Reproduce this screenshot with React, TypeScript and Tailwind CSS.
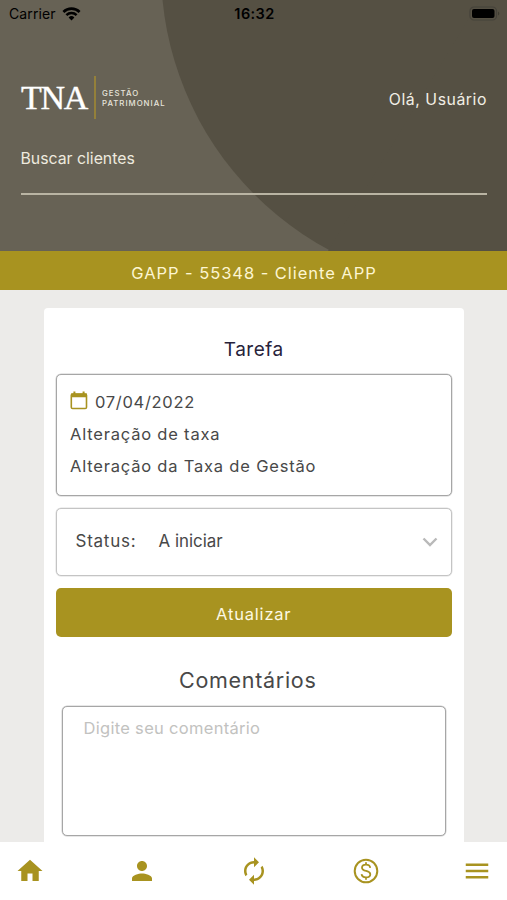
import type { ReactNode } from "react";
import { cva, type VariantProps } from "class-variance-authority";
import { MdAutorenew, MdHome, MdMenu, MdPerson } from "react-icons/md";

const boxVariants = cva("border bg-white rounded-[5px]", {
  variants: {
    tone: {
      dark: "border-[#a6a6a6] shadow-[0_0_0_0.5px_#d0d0d0]",
      light: "border-[#c4c4c4] shadow-[0_0_0_0.5px_#e0e0e0]",
    },
  },
  defaultVariants: {
    tone: "dark",
  },
});

interface BoxProps extends VariantProps<typeof boxVariants> {
  className: string;
  children: ReactNode;
}

const Box = ({ tone, className, children }: BoxProps) => (
  <div className={`${boxVariants({ tone })} ${className}`}>{children}</div>
);

const StatusBar = () => (
  <div className="grid h-7 grid-cols-3 items-center pl-[9px] pr-[7px] text-black">
    <div className="flex items-center gap-[6px] text-[14px] leading-none">
      <span className="tracking-[0.1px]">Carrier</span>
      <svg width="19" height="14" viewBox="0 0 19 14" fill="none" className="-mt-px">
        <path d="M1.4 5a11.5 11.5 0 0 1 16.2 0" stroke="#000" strokeWidth="2.6" />
        <path d="M4.4 8.2a7.2 7.2 0 0 1 10.2 0" stroke="#000" strokeWidth="2.5" />
        <path d="M9.5 13.4 6.6 10.5a4.1 4.1 0 0 1 5.8 0Z" fill="#000" />
      </svg>
    </div>
    <span className="text-center text-[14.5px] font-semibold leading-none tracking-[0.4px]">
      16:32
    </span>
    <svg className="-mt-px justify-self-end" width="31" height="15" viewBox="0 0 31 15">
      <rect x="1" y="1" width="26.5" height="13" rx="4" fill="none" stroke="#45423a" strokeWidth="1.2" />
      <rect x="3" y="3" width="22.5" height="9" rx="2" fill="#000" />
      <path d="M29 5.5a2.2 2.2 0 0 1 0 4Z" fill="#3f3c32" />
    </svg>
  </div>
);

const Logo = () => (
  <div className="flex items-center">
    <span className="w-[67px] whitespace-nowrap pl-px font-['Liberation_Serif',serif] text-[34px] leading-none tracking-[-1.3px] text-white [-webkit-text-stroke:0.4px_white]">
      TNA
    </span>
    <span className="ml-[7px] h-[43px] w-[2px] bg-[#94803a]" />
    <span className="ml-[6px] whitespace-nowrap text-[7.8px] font-medium leading-[10px] tracking-[1px] text-[#e8e5dc]">
      GESTÃO
      <br />
      PATRIMONIAL
    </span>
  </div>
);

const Header = () => (
  <header className="relative h-[251px] overflow-hidden bg-[#676255]">
    <svg className="absolute inset-0" width="507" height="251" viewBox="0 0 507 251">
      <circle cx="480" cy="-31" r="319" fill="#555043" />
      <path d="M480 0h27v251H328Z" fill="#555043" />
    </svg>
    <div className="relative">
      <StatusBar />
      <div className="mt-12 flex items-center justify-between px-5">
        <Logo />
        <span className="pt-[4px] text-[15.8px] tracking-[0.55px] text-[#f1eee5]">Olá, Usuário</span>
      </div>
      <div className="ml-[20.5px] mr-5 mt-[28px] h-[48px] border-b-2 border-[#b9b4a3] text-[15.8px] leading-6 text-[#eeeadf]">
        Buscar clientes
      </div>
    </div>
  </header>
);

const CalendarIcon = () => (
  <svg width="18" height="19" viewBox="0 0 18 19" fill="none" className="-mt-[3px]">
    <rect x="1.3" y="3" width="15.2" height="14.5" rx="1.3" stroke="#a89320" strokeWidth="1.6" />
    <path d="M1 2.6h16v3.6H1zM3.4.6h2v3h-2zM12.6.6h2v3h-2z" fill="#a89320" />
  </svg>
);

const TaskCard = () => (
  <main className="ml-[43.5px] mt-[18px] h-[534px] w-[420.5px] rounded-t-[4px] bg-white px-3 pt-7">
    <h1 className="pt-px text-center text-[19px] leading-[26px] tracking-[0.5px] text-[#28233b]">Tarefa</h1>
    <Box className="mt-[11px] flex h-[122px] flex-col px-[13.5px] pt-[11px] text-[16.5px] leading-8 tracking-[0.8px] text-[#484848]">
      <div className="flex items-center gap-[7px]">
        <CalendarIcon />
        <span className="tracking-[0.7px]">07/04/2022</span>
      </div>
      <span>Alteração de taxa</span>
      <span>Alteração da Taxa de Gestão</span>
    </Box>
    <Box tone="light" className="mt-3 flex h-[68px] items-center pl-[19px] pr-[13px] text-[#484848]">
      <span className="w-[83px] text-[17px] tracking-[0.75px]">Status:</span>
      <span className="flex-1 text-[16.9px]">A iniciar</span>
      <svg width="16" height="10" viewBox="0 0 16 10" fill="none">
        <path d="M1.5 1.5 8 8l6.5-6.5" stroke="#b9b9b9" strokeWidth="2.4" />
      </svg>
    </Box>
    <button className="mt-3 block h-[49px] w-full rounded-[5px] bg-[#a89320] pt-[3px] text-[16.5px] tracking-[0.8px] text-[#fdf9e3]">
      Atualizar
    </button>
    <h2 className="mt-[28px] pr-3 text-center text-[21.5px] leading-[30px] tracking-[0.7px] text-[#484848]">
      Comentários
    </h2>
    <Box className="mx-[6px] mt-[11px] h-[130px] px-[21px] pt-[9px] text-[16.5px] leading-6 text-[#c2c2c0]">
      <span className="tracking-[0.3px]">Digite seu comentário</span>
    </Box>
  </main>
);

const CoinIcon = ({ size, color }: { size: number; color: string }) => (
  <svg width={size} height={size} viewBox="0 0 30 30" fill="none" stroke={color}>
    <circle cx="15" cy="15" r="11.3" strokeWidth="2" />
    <path
      d="M19.2 11.8c-.2-2-1.9-3.2-4.2-3.2s-4 1.2-4 3.1c0 4.3 8.3 2.2 8.3 6.5 0 2-1.9 3.2-4.3 3.2s-4.2-1.2-4.4-3.3M15 6.2v2.6M15 21.2v2.6"
      strokeWidth="1.8"
    />
  </svg>
);

const tabs = [
  { name: "Início", Icon: MdHome },
  { name: "Perfil", Icon: MdPerson },
  { name: "Atualizar", Icon: MdAutorenew },
  { name: "Financeiro", Icon: CoinIcon },
  { name: "Menu", Icon: MdMenu },
];

const TabBar = () => (
  <nav className="flex h-[58px] items-center justify-between bg-white pl-[15.4px] pr-[14.6px]">
    {tabs.map(({ name, Icon }) => (
      <a key={name} aria-label={name}>
        <Icon size={30} color="#a89320" />
      </a>
    ))}
  </nav>
);

const App = () => {
  return (
    <div className="flex h-[900px] w-[507px] flex-col overflow-hidden bg-[#ecebe9] font-[Inter,sans-serif]">
      <Header />
      <div className="h-[39px] bg-[#a89320] pl-px pt-[3px] text-center text-[16.5px] leading-[38px] tracking-[0.95px] text-[#fdf6d2]">
        GAPP - 55348 - Cliente APP
      </div>
      <TaskCard />
      <TabBar />
    </div>
  );
};

export default App;
